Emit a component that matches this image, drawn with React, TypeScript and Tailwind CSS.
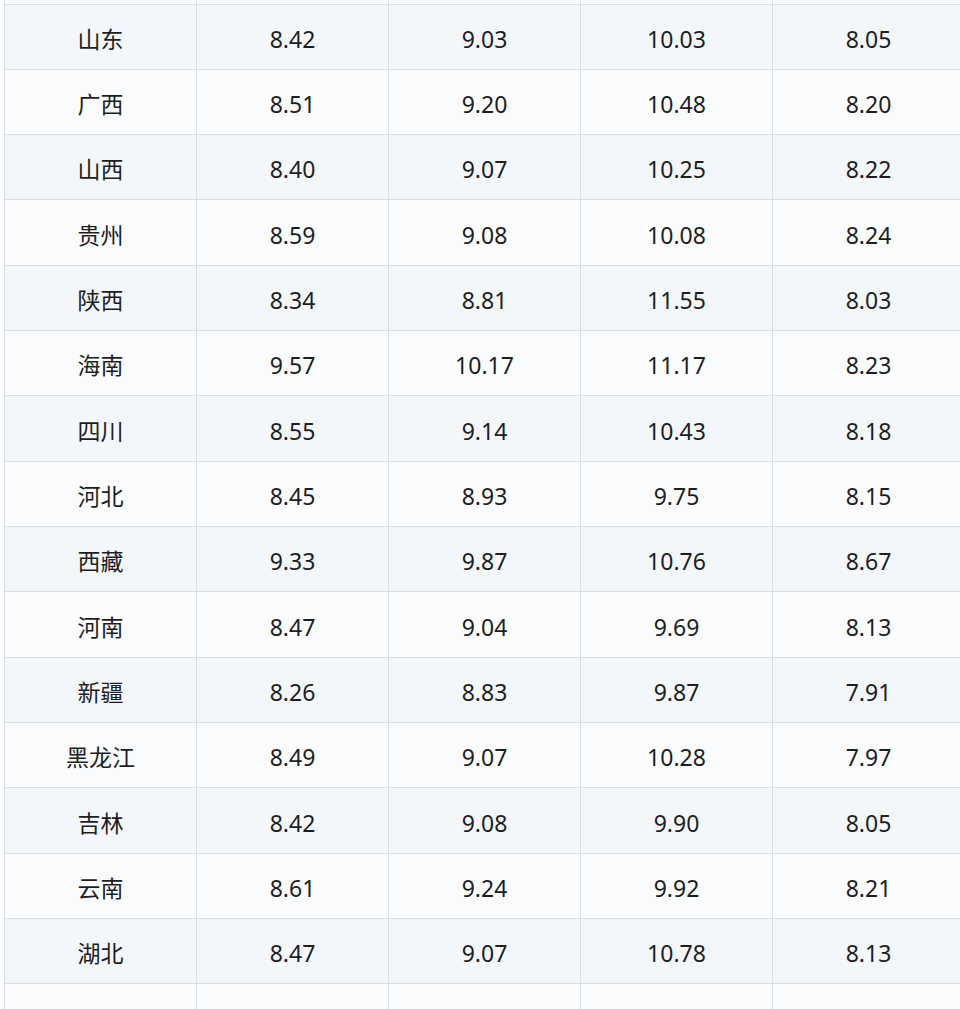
import * as React from 'react';

const rows: [string, string, string, string, string][] = [
  ['山东', '8.42', '9.03', '10.03', '8.05'],
  ['广西', '8.51', '9.20', '10.48', '8.20'],
  ['山西', '8.40', '9.07', '10.25', '8.22'],
  ['贵州', '8.59', '9.08', '10.08', '8.24'],
  ['陕西', '8.34', '8.81', '11.55', '8.03'],
  ['海南', '9.57', '10.17', '11.17', '8.23'],
  ['四川', '8.55', '9.14', '10.43', '8.18'],
  ['河北', '8.45', '8.93', '9.75', '8.15'],
  ['西藏', '9.33', '9.87', '10.76', '8.67'],
  ['河南', '8.47', '9.04', '9.69', '8.13'],
  ['新疆', '8.26', '8.83', '9.87', '7.91'],
  ['黑龙江', '8.49', '9.07', '10.28', '7.97'],
  ['吉林', '8.42', '9.08', '9.90', '8.05'],
  ['云南', '8.61', '9.24', '9.92', '8.21'],
  ['湖北', '8.47', '9.07', '10.78', '8.13'],
];

const cols = [0, 1, 2, 3, 4];

export default function App() {
  return (
    <div className="w-[960px] h-[1009px] overflow-hidden bg-white pl-[4px]">
      <table
        className="w-[960px] border-collapse table-fixed text-[23px] text-[#1e1e1e]"
        style={{ fontFamily: '"Noto Sans", "Noto Sans CJK SC", sans-serif' }}
      >
        <tbody>
          {/* 上一行的底边，只露出一点 */}
          <tr className="h-[4px] bg-[#fafbfd]">
            {cols.map(i => (
              <td key={i} className="w-[192px] p-0 border-x border-b border-[#d9dee5]" />
            ))}
          </tr>
          {rows.map((r, idx) => (
            <tr
              key={r[0]}
              className={idx % 2 === 0 ? 'h-[65.33px] bg-[#f3f6fb]' : 'h-[65.33px] bg-[#fafbfd]'}
            >
              {r.map((c, j) => (
                <td
                  key={j}
                  className="w-[192px] p-0 pt-[5px] text-center align-middle border border-[#d9dee5] leading-none"
                >
                  {c}
                </td>
              ))}
            </tr>
          ))}
          {/* 下一行，只露出顶部 */}
          <tr className="h-[65.33px] bg-[#fafbfd]">
            {cols.map(i => (
              <td key={i} className="w-[192px] p-0 border border-[#d9dee5]" />
            ))}
          </tr>
        </tbody>
      </table>
    </div>
  );
}
